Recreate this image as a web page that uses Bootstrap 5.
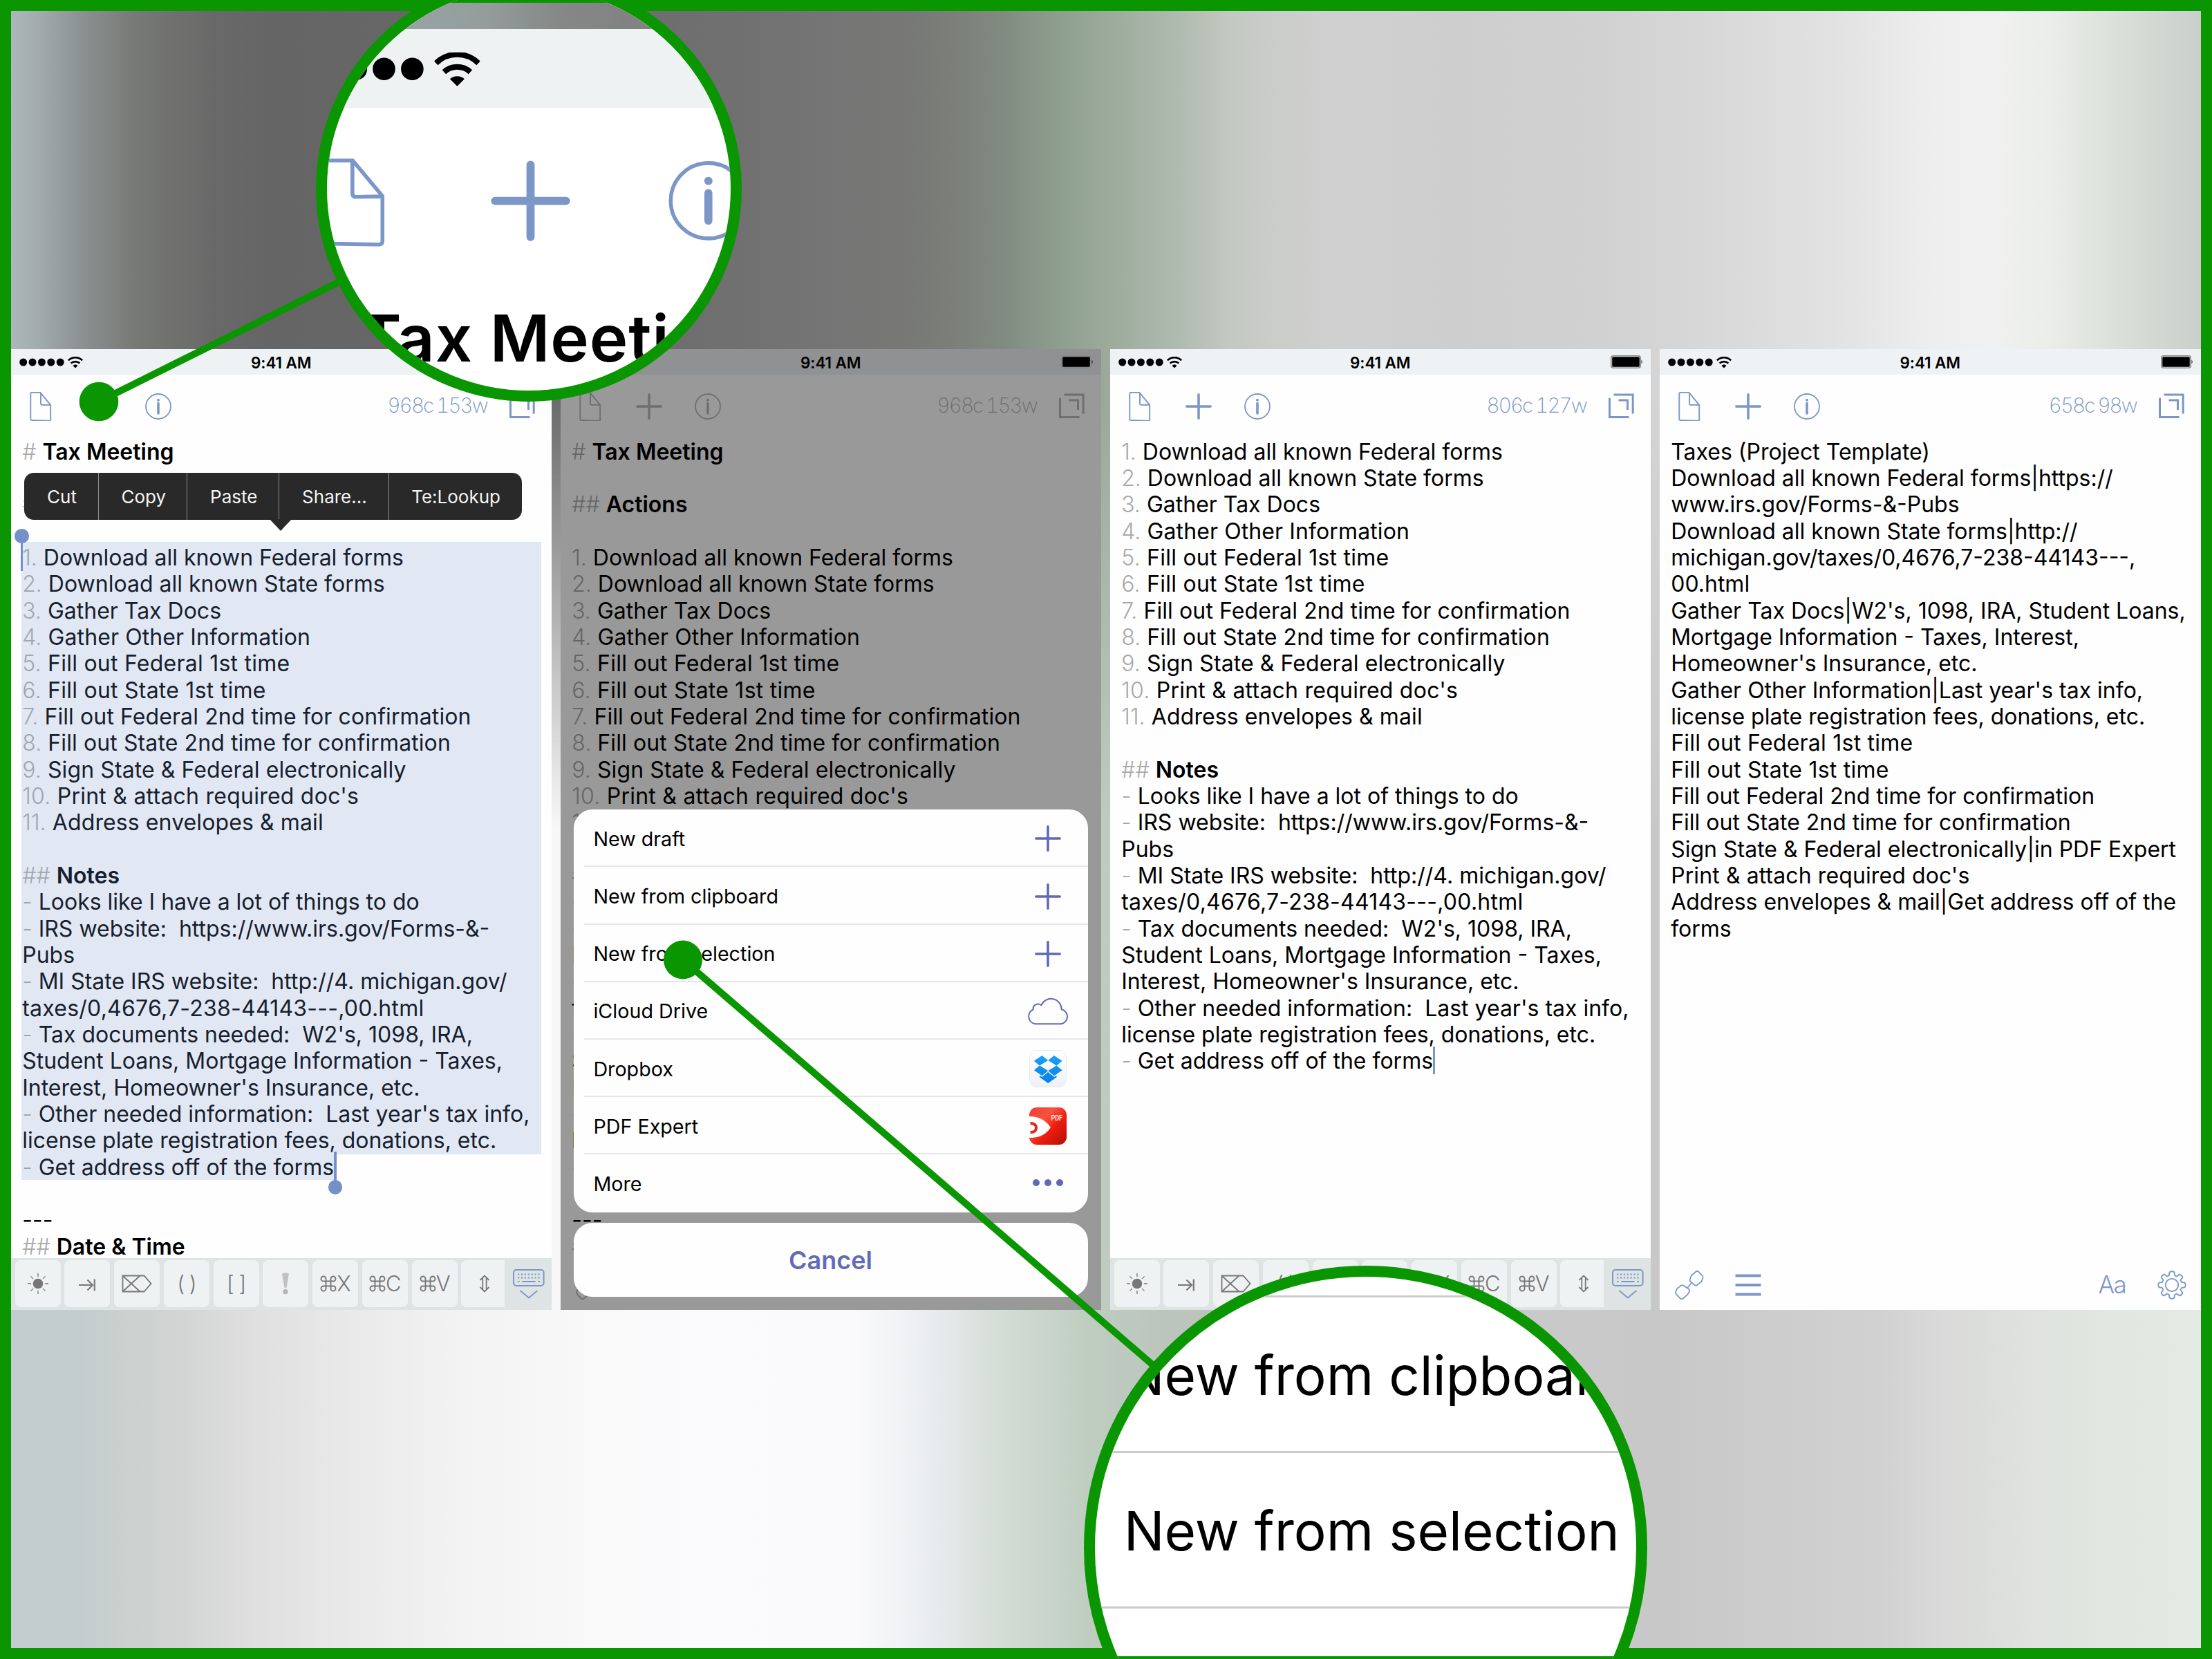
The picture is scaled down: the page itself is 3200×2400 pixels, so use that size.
<!DOCTYPE html>
<html lang="en">
<head>
<meta charset="utf-8">
<title>Drafts – new from selection</title>
<link rel="stylesheet" href="https://cdn.jsdelivr.net/npm/bootstrap@5.3.0/dist/css/bootstrap.min.css">
<script src="https://cdn.jsdelivr.net/npm/bootstrap@5.3.0/dist/js/bootstrap.bundle.min.js"></script>
<style>
:root{--green:#099600;--tint:#7c96c8;--grey:#a9a9a9}
body{width:3200px;height:2400px;margin:0;overflow:hidden;font-family:Inter,"Liberation Sans",sans-serif;color:#000}
.stage{width:3200px;height:2400px;border:16px solid var(--green);overflow:hidden;isolation:isolate;
 background:linear-gradient(90deg,#adb7bb 0,#a2abad 40px,#8c9292 100px,#777975 180px,#696969 290px,#656565 380px,#676767 600px,#707070 1040px,#757575 1180px,#777776 1280px,#7a7d78 1350px,#808a80 1430px,#8f9f8f 1520px,#a0ae9f 1610px,#b0bbb0 1690px,#c2c8c2 1760px,#cbcdca 1830px,#d0d0d0 1920px,#cecece 2090px,#d1d1d1 2300px,#d8d8d8 2460px,#e2e2e2 2640px,#eee 2780px,#f0f1f0 2870px,#ebedea 2950px,#dce2dc 3030px,#d2d9d3 3100px,#c9cfca 3168px)}
.stage::before{content:"";position:absolute;z-index:-1;inset:0;
 background:linear-gradient(90deg,#c3ccd0 0,#c4cdcd 100px,#cad1ce 170px,#d3d5d4 250px,#dfdfdf 350px,#eaeaea 500px,#f3f3f3 660px,#f9f9fa 850px,#fbfbfd 1000px,#fafafc 1220px,#f0f2f4 1290px,#e4e8e9 1360px,#d6ded8 1420px,#c9d5ca 1500px,#bfcdc1 1560px,#bcc6bd 1650px,#bcc2bc 1750px,#c4c6c4 1900px,#c9c9c9 2200px,#c8c8c9 2400px,#cdcdcd 2560px,#d1d1d1 2700px,#d9dad9 2800px,#dfe2de 2920px,#e1e7e1 3040px,#e3eae3 3168px);
 -webkit-mask-image:linear-gradient(180deg,transparent 560px,#000 1180px);mask-image:linear-gradient(180deg,transparent 560px,#000 1180px)}
.phones{padding-top:489px;gap:13px}
.phone{width:782px;height:1390px;background:#fefefe;flex:none}
.phone:last-child{flex:1 0 auto}
.statusbar{height:37px;background:#eef2f4;padding:0 10px 0 11.5px;font-size:22.5px;font-weight:600;letter-spacing:-.1px}
.statusbar>*{flex:1 1 0}
.clock{padding:3px 2px 0 0}
.tools{height:91.2px;padding:0 21.7px;color:var(--tint)}
.gap-btn{gap:43px}
.ico{width:42px;height:42px;fill:none;stroke:currentColor;display:block;overflow:visible}
.count{font-size:29.5px;font-weight:250;letter-spacing:-1.9px;margin-right:29.500px;margin-top:-2px;line-height:1;font-feature-settings:"tnum"}
.count span{margin-left:5px}
.note{flex:1 1 0;min-height:0;overflow:visible;padding:1.600px 0 0 14.9px;font-size:32px;line-height:38.34px;white-space:pre}
.note div{height:38.34px;padding-left:1.300px}
.note i{font-style:normal;color:var(--grey);font-weight:300}
.note b{font-weight:600}
.note .w1{letter-spacing:.24px}
.note .w2{letter-spacing:.1px}
.note .sel{background:#e1e8f3;color:#17202e;height:auto;padding-left:0;margin:-4px 15px 0 0;padding-top:4px}
.note .endrow{padding-left:0;margin-top:-1.600px;height:39.900px;color:#17202e}
.sel-end{display:block;width:453px;height:38.800px;padding:1.600px 0 0 1.300px;background:#e1e8f3}
.sel i,.sel-end i{color:#a0a7b2!important}
.handle{width:3.6px;background:#7390c8;height:42px}
.handle::after{content:"";position:absolute;left:-8.4px;width:20.5px;height:20.5px;border-radius:50%;background:#7390c8}
.handle.start{left:13.8px;top:279px}.handle.start::after{top:-19px}
.handle.end{left:467px;top:1161px}.handle.end::after{top:41px}
.caret{left:467px;top:1009px;width:3px;height:40px;background:#7c96c8}
.popmenu{left:19px;top:179px;width:719.5px;height:68px;border-radius:14px;background:#292929;color:#f4f4f4;font-size:26px;line-height:69px;text-align:center}
.popmenu>div{padding-left:2px}
.popmenu>div+div{border-left:1.5px solid #8d8d8d}
.popmenu::after{content:"";position:absolute;left:354.5px;top:67px;border:16.5px solid transparent;border-top:17.5px solid #292929;border-bottom:0}
.keys{height:75px;background:#dee4e4;padding:3.4px 0 3.6px 5.6px;color:#777;gap:5.75px}
.keycap{width:66px;height:68px;border-radius:8px;background:#eef2f3;flex:none;font-size:31px;font-weight:300;letter-spacing:-1px}
.keycap.cut{width:62.4px;border-radius:8px 0 0 8px;padding-left:4px}
.keycap svg{fill:none;stroke:#777;overflow:visible;flex:none}
.hidekb{width:60px;color:var(--tint)}
.hidekb svg{fill:none;stroke:currentColor;overflow:visible;margin-top:2px}
.foot{height:75px;padding:2px 20.7px 0 21.7px;color:var(--tint)}
.aa{font-size:35px;font-weight:300;letter-spacing:-1.5px;margin-right:46px}
.dimmed{--tint:#6f6f6f;background:#999}
.dimmed .statusbar{background:#8f9193;color:#000}
.dimmed .note i{color:#666}
.sheet{left:19.2px;right:19.2px;top:666.3px}
.sheet .pane{background:#fefefe;border-radius:27px;overflow:hidden}
.opt{height:83.18px;padding:1px 27px 0 28.2px;font-size:28.7px}
.opt:not(:last-child){background:linear-gradient(#e6e6e8,#e6e6e8) no-repeat 15px 100%/100% 2px}
.opt .pic{width:62px}
.opt svg{display:block;margin:0 auto;overflow:visible;color:#6169b6}
.cancelbtn{height:107.5px;margin-top:15px;color:#636bb8;font-size:36px;font-weight:600;padding:1px 1px 0 0}
.callouts{left:0;top:0;width:3200px;height:2400px;overflow:hidden}
.lens{border:16.2px solid var(--green);border-radius:50%;overflow:hidden;background:#fff}
.lens-a{left:457px;top:-35px;width:616px;height:616px}
.lens-a::after,.lens-b::after{content:"";position:absolute;left:0;right:0;height:23px;background:var(--green)}
.lens-a::after{top:-.2px}
.lens-b{left:1567.7px;top:1831px;width:815.6px;height:815.6px}
.lens-b::after{top:548.6px}
.lens-a .sky{height:61px;background:linear-gradient(90deg,#98a2a2 140px,#949d9c 230px,#868987 330px,#828282 430px)}
.lens-a .bar{height:114px;background:#eef2f3}
.lens-b .zrow{height:225px;border-bottom:3px solid #cbcbce;font-size:78.2px;padding:5px 0 0 42px;white-space:nowrap}
.lens-b .zrow.first{height:29.5px;padding:0}
.wires{left:0;top:0;width:3200px;height:2400px}
.gone{width:0;height:0}
</style>
</head>
<body>
<svg class="position-absolute gone">
 <symbol id="doc" viewBox="0 0 42 42"><path d="M7.8 .9h12.6l14.8 17.9v21.3a1.5 1.5 0 0 1-1.5 1.5L7.8 41a1.5 1.5 0 0 1-1.5-1.500V2.400A1.500 1.500 0 0 1 7.800 .900zM21 1.500v15.800a1.500 1.500 0 0 0 1.500 1.500l12.500-.200" stroke-width="1.900"/></symbol>
 <symbol id="plus" viewBox="0 0 42 42"><path d="M21 3.800v34.400M3.800 21h34.400" stroke-width="3.600" stroke-linecap="round"/></symbol>
 <symbol id="info" viewBox="0 0 42 42"><circle cx="21" cy="21" r="18" stroke-width="1.800"/><path d="M21 16.500v14.500" stroke-width="3.600" stroke-linecap="round"/><circle cx="21" cy="11.700" r="2" fill="currentColor" stroke="none"/></symbol>
 <symbol id="expand" viewBox="0 0 42 42"><path d="M4.500 8.800v27.600h28M10.500 3.900h27.700v27.500M17.500 12h13v14" stroke-width="3"/></symbol>
 <symbol id="wifi" viewBox="0 0 66 49"><path d="M2.300 15.500a44 44 0 0 1 61.400 0" fill="none" stroke="#000" stroke-width="8"/><path d="M14 28.500a28 28 0 0 1 38 0" fill="none" stroke="#000" stroke-width="8"/><path d="M22.500 38.500a15.500 15.500 0 0 1 21 0L33 49z" fill="#000"/></symbol>
 <symbol id="signal" viewBox="0 0 92 18"><g fill="#000"><circle cx="5.700" cy="9" r="5.500"/><circle cx="19" cy="9" r="5.500"/><circle cx="32.400" cy="9" r="5.500"/><circle cx="45.800" cy="9" r="5.500"/><circle cx="59.200" cy="9" r="5.500"/></g><use href="#wifi" x="70" y="1" width="22" height="16.500"/></symbol>
 <symbol id="battery" viewBox="0 0 48 19"><rect x=".8" y=".8" width="42.400" height="17.400" rx="3" fill="none" stroke="#888" stroke-width="1.600"/><rect x="2.200" y="2.200" width="39.600" height="14.600" rx="1.500" fill="#000"/><path d="M44.500 6.500q2.500 3 0 6z" fill="#222"/></symbol>
 <symbol id="cmd" viewBox="0 0 24 24"><path d="M8.500 8.500h7v7h-7zM8.500 8.500V5A3.500 3.500 0 1 0 5 8.500zM15.500 8.500V5A3.500 3.500 0 1 1 19 8.500zM8.500 15.500V19A3.500 3.500 0 1 1 5 15.500zM15.500 15.500V19A3.500 3.500 0 1 0 19 15.500z" fill="none" stroke="#777" stroke-width="1.900"/></symbol>
 <symbol id="sun" viewBox="0 0 32 32"><circle cx="16" cy="16" r="7.300" fill="#777" stroke="none"/><path d="M16 1v5M16 26v5M1 16h5M26 16h5M5.400 5.400l3.500 3.500M23.100 23.100l3.500 3.500M5.400 26.600l3.500-3.500M23.100 8.900l3.500-3.500" stroke-width="1.300"/></symbol>
 <symbol id="tab" viewBox="0 0 26 24"><path d="M1 12h20M13.500 4.500l7.500 7.500-7.500 7.500M23.800 3.500v17" stroke-width="2.200"/></symbol>
 <symbol id="fdel" viewBox="0 0 44 26"><path d="M1.500 1.500h31L42.500 13 32.500 24.500h-31zM2 2l24 22M26 2L2 24" stroke-width="1.800"/></symbol>
 <symbol id="bang" viewBox="0 0 12 32"><path d="M1 1.500q5-2 10 0L7.600 21.500q-1.600 1.200-3.200 0z" fill="#c0c2c2" stroke="none"/><circle cx="6" cy="27.700" r="3.600" fill="#b4b6b6" stroke="none"/></symbol>
 <symbol id="updown" viewBox="0 0 16 26"><path d="M1.500 8L8 1.500 14.500 8M1.500 18L8 24.500 14.500 18M5.300 5v16M10.700 5v16" stroke-width="1.800"/></symbol>
 <symbol id="kbd" viewBox="0 0 46 44"><rect x="1" y="1" width="43.600" height="23" rx="4" stroke-width="2"/><path d="M7 7.500h32M7 12.500h32" stroke-width="2.200" stroke-dasharray="2.200 2.700"/><path d="M7 18h2.500M13.500 18h19M36.500 18H39" stroke-width="2.200"/><path d="M10.500 31l12.500 10.500L35.500 31" stroke-width="1.800"/></symbol>
 <symbol id="chain" viewBox="0 0 42 42"><path d="M30.500 1.500q1.700-1.200 3.400 0l5.500 5.500q1.600 1.800 1 4l-2 5-6.500 5.200q-1.700 1-3.400 0L23 16.500q-2-1.800-1.200-4l2-5zM9 21.700q1.700-1.200 3.400 0l7 4.500q2 1.800 1.500 4l-3 5-6.500 5.500q-1.700 1-3.400 0L2.500 35q-2-2-1-5l1.700-4zM18.500 24.500l5-6" stroke-width="1.800"/></symbol>
 <symbol id="bars" viewBox="0 0 42 42"><path d="M2.500 7.500h37M2.500 21h37M2.500 34.500h37" stroke-width="3.900"/></symbol>
 <symbol id="gear" viewBox="0 0 42 42"><circle cx="21" cy="21" r="9.200" stroke-width="1.800"/><path stroke-width="1.800" stroke-linejoin="round" d="M17.600 2.500Q21 0 24.400 2.500L25.200 7.300Q26.700 7.700 28 8.500L32 5.600Q35.600 6.400 36.400 10L33.500 14Q34.300 15.300 34.700 16.800L39.500 17.600Q42 21 39.500 24.400L34.700 25.200Q34.300 26.700 33.500 28L36.400 32Q35.600 35.600 32 36.400L28 33.500Q26.700 34.300 25.200 34.700L24.400 39.500Q21 42 17.600 39.500L16.800 34.700Q15.300 34.300 14 33.500L10 36.400Q6.400 35.600 5.600 32L8.500 28Q7.700 26.700 7.300 25.200L2.500 24.400Q0 21 2.500 17.600L7.300 16.800Q7.700 15.300 8.500 14L5.600 10Q6.400 6.400 10 5.600L14 8.500Q15.300 7.700 16.800 7.300z"/></symbol>
</svg>

<div class="stage position-relative">
 <div class="phones d-flex">

  <!-- Editor with a selection -->
  <section class="phone d-flex flex-column position-relative">
   <div class="statusbar d-flex align-items-center"><span><svg width="92" height="18" class="d-block"><use href="#signal"/></svg></span><span class="clock text-center">9:41 AM</span><span><svg width="48" height="19" class="d-block ms-auto"><use href="#battery"/></svg></span></div>
   <div class="tools d-flex align-items-center justify-content-between">
    <div class="d-flex gap-btn"><svg class="ico"><use href="#doc"/></svg><svg class="ico"><use href="#plus"/></svg><svg class="ico"><use href="#info"/></svg></div>
    <div class="d-flex align-items-center"><span class="count">968c<span>153w</span></span><svg class="ico"><use href="#expand"/></svg></div>
   </div>
   <div class="note"><div><i>#</i> <b>Tax Meeting</b></div><div></div><div><i>#</i></div><div></div><div class="sel"><div><i>1.</i> Download all known Federal forms</div><div><i>2.</i> Download all known State forms</div><div><i>3.</i> Gather Tax Docs</div><div class="w2"><i>4.</i> Gather Other Information</div><div class="w1"><i>5.</i> Fill out Federal 1st time</div><div class="w1"><i>6.</i> Fill out State 1st time</div><div class="w2"><i>7.</i> Fill out Federal 2nd time for confirmation</div><div class="w2"><i>8.</i> Fill out State 2nd time for confirmation</div><div class="w2"><i>9.</i> Sign State &amp; Federal electronically</div><div class="w1"><i>10.</i> Print &amp; attach required doc's</div><div class="w2"><i>11.</i> Address envelopes &amp; mail</div><div></div><div><i>##</i> <b>Notes</b></div><div><i>-</i> Looks like I have a lot of things to do</div><div><i>-</i> IRS website:  https://www.irs.gov/Forms-&amp;-</div><div>Pubs</div><div><i>-</i> MI State IRS website:  http://4. michigan.gov/</div><div class="w1">taxes/0,4676,7-238-44143---,00.html</div><div><i>-</i> Tax documents needed:  W2's, 1098, IRA,</div><div>Student Loans, Mortgage Information - Taxes,</div><div>Interest, Homeowner's Insurance, etc.</div><div><i>-</i> Other needed information:  Last year's tax info,</div><div>license plate registration fees, donations, etc.</div></div><div class="endrow"><span class="sel-end"><i>-</i> Get address off of the forms</span></div><div></div><div>---</div><div><i>##</i> <b>Date &amp; Time</b></div></div>
   <div class="keys d-flex position-relative">
    <div class="keycap d-flex align-items-center justify-content-center"><svg width="32" height="32"><use href="#sun"/></svg></div>
    <div class="keycap d-flex align-items-center justify-content-center pt-1"><svg width="26" height="24"><use href="#tab"/></svg></div>
    <div class="keycap d-flex align-items-center justify-content-center"><svg width="44" height="26"><use href="#fdel"/></svg></div>
    <div class="keycap d-flex align-items-center justify-content-center">( )</div>
    <div class="keycap d-flex align-items-center justify-content-center">[ ]</div>
    <div class="keycap d-flex align-items-center justify-content-center"><svg width="12" height="32"><use href="#bang"/></svg></div>
    <div class="keycap d-flex align-items-center justify-content-center"><svg width="24" height="24"><use href="#cmd"/></svg>X</div>
    <div class="keycap d-flex align-items-center justify-content-center"><svg width="24" height="24"><use href="#cmd"/></svg>C</div>
    <div class="keycap d-flex align-items-center justify-content-center"><svg width="24" height="24"><use href="#cmd"/></svg>V</div>
    <div class="keycap cut d-flex align-items-center justify-content-center"><svg width="16" height="26"><use href="#updown"/></svg></div>
    <div class="hidekb d-flex align-items-center justify-content-center"><svg width="46" height="44"><use href="#kbd"/></svg></div>
   </div>
   <div class="handle start position-absolute"></div>
   <div class="handle end position-absolute"></div>
   <div class="popmenu position-absolute d-flex"><div style="width:107px">Cut</div><div style="width:128.4px">Copy</div><div style="width:132.800px">Paste</div><div style="width:158.500px">Share...</div><div style="width:192.800px">Te:Lookup</div></div>
  </section>

  <!-- Dimmed editor behind the action sheet -->
  <section class="phone dimmed d-flex flex-column position-relative">
   <div class="statusbar d-flex align-items-center"><span><svg width="92" height="18" class="d-block"><use href="#signal"/></svg></span><span class="clock text-center">9:41 AM</span><span><svg width="48" height="19" class="d-block ms-auto"><use href="#battery"/></svg></span></div>
   <div class="tools d-flex align-items-center justify-content-between">
    <div class="d-flex gap-btn"><svg class="ico"><use href="#doc"/></svg><svg class="ico"><use href="#plus"/></svg><svg class="ico"><use href="#info"/></svg></div>
    <div class="d-flex align-items-center"><span class="count">968c<span>153w</span></span><svg class="ico"><use href="#expand"/></svg></div>
   </div>
   <div class="note"><div><i>#</i> <b>Tax Meeting</b></div><div></div><div><i>##</i> <b>Actions</b></div><div></div><div><i>1.</i> Download all known Federal forms</div><div><i>2.</i> Download all known State forms</div><div><i>3.</i> Gather Tax Docs</div><div class="w2"><i>4.</i> Gather Other Information</div><div class="w1"><i>5.</i> Fill out Federal 1st time</div><div class="w1"><i>6.</i> Fill out State 1st time</div><div class="w2"><i>7.</i> Fill out Federal 2nd time for confirmation</div><div class="w2"><i>8.</i> Fill out State 2nd time for confirmation</div><div class="w2"><i>9.</i> Sign State &amp; Federal electronically</div><div class="w1"><i>10.</i> Print &amp; attach required doc's</div><div><i>11.</i></div><div></div><div><i>##</i></div><div><i>-</i></div><div><i>-</i></div><div>P</div><div><i>-</i></div><div>t</div><div><i>-</i></div><div>S</div><div>I</div><div><i>-</i></div><div>l</div><div><i>-</i></div><div></div><div>---</div><div><i>##</i></div></div>
   <div class="foot d-flex align-items-center"><svg class="ico"><use href="#chain"/></svg></div>
   <div class="sheet position-absolute">
    <div class="pane">
     <div class="opt d-flex align-items-center justify-content-between">New draft<span class="pic"><svg width="42" height="42" fill="none" stroke="currentColor"><use href="#plus"/></svg></span></div>
     <div class="opt d-flex align-items-center justify-content-between">New from clipboard<span class="pic"><svg width="42" height="42" fill="none" stroke="currentColor"><use href="#plus"/></svg></span></div>
     <div class="opt d-flex align-items-center justify-content-between">New from selection<span class="pic"><svg width="42" height="42" fill="none" stroke="currentColor"><use href="#plus"/></svg></span></div>
     <div class="opt d-flex align-items-center justify-content-between">iCloud Drive<span class="pic"><svg width="60" height="38" fill="none" stroke="currentColor" stroke-width="2"><path d="M11.500 37.300A11 11 0 0 1 8.500 16.500C8 9.500 15 6.500 20.300 10.200A15.300 15.300 0 0 1 49.700 16.300A10.700 10.700 0 0 1 49 37.300z" stroke-linejoin="round"/></svg></span></div>
     <div class="opt d-flex align-items-center justify-content-between">Dropbox<span class="pic"><svg width="54" height="54"><defs><linearGradient id="tile" x2="0" y2="1"><stop stop-color="#fff"/><stop offset="1" stop-color="#eef1f4"/></linearGradient><linearGradient id="dbx" x2="0" y2="1"><stop stop-color="#1aa0fa"/><stop offset="1" stop-color="#0a7fe6"/></linearGradient></defs><rect x=".5" y=".5" width="53" height="53" rx="11" fill="url(#tile)" stroke="#e8eaec"/><path d="M18.500 8L6.800 15.800 15 22.500 27.200 14.900zM35.900 8L47.600 15.800 39.400 22.500 27.200 14.900zM6.800 29.300L15 22.500 27.200 30.100 18.500 37.300zM47.600 29.300L39.400 22.500 27.200 30.100 35.900 37.300zM27.200 31.800L36 39 39.500 36.700V39.400L27.200 48 15 39.400V36.700L18.500 39z" fill="url(#dbx)"/></svg></span></div>
     <div class="opt d-flex align-items-center justify-content-between">PDF Expert<span class="pic"><svg width="54" height="54"><defs><linearGradient id="red" x2="1" y2="1"><stop stop-color="#e8402f"/><stop offset=".35" stop-color="#fb5140"/><stop offset=".6" stop-color="#ee1c0e"/><stop offset="1" stop-color="#b01008"/></linearGradient></defs><rect width="54" height="54" rx="11" fill="url(#red)"/><path d="M0 13Q20 13 31 29 21 44.500 0 44z" fill="#fff"/><path d="M1.500 23Q10 23 10 29.500T1.500 36" fill="none" stroke="#dd2a1a" stroke-width="4"/><text x="31.500" y="18.500" font-family="Roboto" font-size="10.500" font-weight="500" fill="#fff" textLength="16.500" lengthAdjust="spacingAndGlyphs">PDF</text></svg></span></div>
     <div class="opt d-flex align-items-center justify-content-between">More<span class="pic"><svg width="44" height="12" fill="currentColor"><circle cx="5" cy="5" r="5"/><circle cx="22" cy="5" r="5"/><circle cx="39" cy="5" r="5"/></svg></span></div>
    </div>
    <div class="pane cancelbtn d-flex align-items-center justify-content-center">Cancel</div>
   </div>
  </section>

  <!-- Draft made from the selection -->
  <section class="phone d-flex flex-column position-relative">
   <div class="statusbar d-flex align-items-center"><span><svg width="92" height="18" class="d-block"><use href="#signal"/></svg></span><span class="clock text-center">9:41 AM</span><span><svg width="48" height="19" class="d-block ms-auto"><use href="#battery"/></svg></span></div>
   <div class="tools d-flex align-items-center justify-content-between">
    <div class="d-flex gap-btn"><svg class="ico"><use href="#doc"/></svg><svg class="ico"><use href="#plus"/></svg><svg class="ico"><use href="#info"/></svg></div>
    <div class="d-flex align-items-center"><span class="count">806c<span>127w</span></span><svg class="ico"><use href="#expand"/></svg></div>
   </div>
   <div class="note"><div><i>1.</i> Download all known Federal forms</div><div><i>2.</i> Download all known State forms</div><div><i>3.</i> Gather Tax Docs</div><div class="w2"><i>4.</i> Gather Other Information</div><div class="w1"><i>5.</i> Fill out Federal 1st time</div><div class="w1"><i>6.</i> Fill out State 1st time</div><div class="w2"><i>7.</i> Fill out Federal 2nd time for confirmation</div><div class="w2"><i>8.</i> Fill out State 2nd time for confirmation</div><div class="w2"><i>9.</i> Sign State &amp; Federal electronically</div><div class="w1"><i>10.</i> Print &amp; attach required doc's</div><div class="w2"><i>11.</i> Address envelopes &amp; mail</div><div></div><div><i>##</i> <b>Notes</b></div><div><i>-</i> Looks like I have a lot of things to do</div><div><i>-</i> IRS website:  https://www.irs.gov/Forms-&amp;-</div><div>Pubs</div><div><i>-</i> MI State IRS website:  http://4. michigan.gov/</div><div class="w1">taxes/0,4676,7-238-44143---,00.html</div><div><i>-</i> Tax documents needed:  W2's, 1098, IRA,</div><div>Student Loans, Mortgage Information - Taxes,</div><div>Interest, Homeowner's Insurance, etc.</div><div><i>-</i> Other needed information:  Last year's tax info,</div><div>license plate registration fees, donations, etc.</div><div><i>-</i> Get address off of the forms</div></div>
   <div class="keys d-flex">
    <div class="keycap d-flex align-items-center justify-content-center"><svg width="32" height="32"><use href="#sun"/></svg></div>
    <div class="keycap d-flex align-items-center justify-content-center pt-1"><svg width="26" height="24"><use href="#tab"/></svg></div>
    <div class="keycap d-flex align-items-center justify-content-center"><svg width="44" height="26"><use href="#fdel"/></svg></div>
    <div class="keycap d-flex align-items-center justify-content-center">( )</div>
    <div class="keycap"></div>
    <div class="keycap"></div>
    <div class="keycap d-flex align-items-center justify-content-center"><svg width="24" height="24"><use href="#cmd"/></svg>X</div>
    <div class="keycap d-flex align-items-center justify-content-center"><svg width="24" height="24"><use href="#cmd"/></svg>C</div>
    <div class="keycap d-flex align-items-center justify-content-center"><svg width="24" height="24"><use href="#cmd"/></svg>V</div>
    <div class="keycap cut d-flex align-items-center justify-content-center"><svg width="16" height="26"><use href="#updown"/></svg></div>
    <div class="hidekb d-flex align-items-center justify-content-center"><svg width="46" height="44"><use href="#kbd"/></svg></div>
   </div>
   <div class="caret position-absolute"></div>
  </section>

  <!-- Project template -->
  <section class="phone d-flex flex-column position-relative">
   <div class="statusbar d-flex align-items-center"><span><svg width="92" height="18" class="d-block"><use href="#signal"/></svg></span><span class="clock text-center">9:41 AM</span><span><svg width="48" height="19" class="d-block ms-auto"><use href="#battery"/></svg></span></div>
   <div class="tools d-flex align-items-center justify-content-between">
    <div class="d-flex gap-btn"><svg class="ico"><use href="#doc"/></svg><svg class="ico"><use href="#plus"/></svg><svg class="ico"><use href="#info"/></svg></div>
    <div class="d-flex align-items-center"><span class="count">658c<span>98w</span></span><svg class="ico"><use href="#expand"/></svg></div>
   </div>
   <div class="note"><div>Taxes (Project Template)</div><div>Download all known Federal forms|https://</div><div>www.irs.gov/Forms-&amp;-Pubs</div><div>Download all known State forms|http://</div><div>michigan.gov/taxes/0,4676,7-238-44143---,</div><div>00.html</div><div>Gather Tax Docs|W2's, 1098, IRA, Student Loans,</div><div>Mortgage Information - Taxes, Interest,</div><div>Homeowner's Insurance, etc.</div><div>Gather Other Information|Last year's tax info,</div><div>license plate registration fees, donations, etc.</div><div class="w1">Fill out Federal 1st time</div><div class="w1">Fill out State 1st time</div><div>Fill out Federal 2nd time for confirmation</div><div>Fill out State 2nd time for confirmation</div><div>Sign State &amp; Federal electronically|in PDF Expert</div><div class="w2">Print &amp; attach required doc's</div><div>Address envelopes &amp; mail|Get address off of the</div><div>forms</div></div>
   <div class="foot d-flex align-items-center justify-content-between">
    <div class="d-flex gap-btn"><svg class="ico"><use href="#chain"/></svg><svg class="ico"><use href="#bars"/></svg></div>
    <div class="d-flex align-items-center"><span class="aa">Aa</span><svg class="ico"><use href="#gear"/></svg></div>
   </div>
  </section>
 </div>
</div>

<!-- Callouts -->
<div class="callouts position-absolute">
<svg class="wires position-absolute" fill="#099600" stroke="#099600" stroke-width="10">
 <path d="M143 581L496 405M988 1388.500L1674 1980"/>
 <g stroke="none"><circle cx="143" cy="581" r="28.300"/><circle cx="988" cy="1388.500" r="28"/></g>
</svg>
<div class="lens lens-a position-absolute">
 <div class="sky"></div><div class="bar"></div>
 <svg class="position-absolute top-0 start-0" width="584" height="584" viewBox="473.200 -18.800 584 584">
  <g fill="#000"><circle cx="515" cy="100" r="16.300"/><circle cx="555.700" cy="100" r="16.300"/><circle cx="596.600" cy="100" r="16.300"/></g>
  <use href="#wifi" x="628.600" y="76" width="66" height="49"/>
  <g fill="none" stroke="#7c96c8">
   <path d="M462 232.500h48.500L553.500 284v64.500q0 5.500-5 5.500L462 352.500M510 234v45.500q0 5.500 5 5.500l38-.700" stroke-width="5.600"/>
   <path d="M767.700 238.500v104.500M716.500 290.800h102.500" stroke-width="11.800" stroke-linecap="round"/>
   <circle cx="1025" cy="290.600" r="54.500" stroke-width="5.600"/>
   <path d="M1025 279.500v40" stroke-width="11.600" stroke-linecap="round"/>
  </g>
  <circle cx="1025" cy="262" r="6" fill="#7c96c8"/>
  <text x="519" y="523.500" font-size="94" font-weight="560" letter-spacing=".900">Tax Meeti</text>
 </svg>
</div>
<div class="lens lens-b position-absolute">
 <div class="zrow first"></div>
 <div class="zrow d-flex align-items-center">New from clipboard</div>
 <div class="zrow d-flex align-items-center">New from selection</div>
</div>
</div>
</body>
</html>
